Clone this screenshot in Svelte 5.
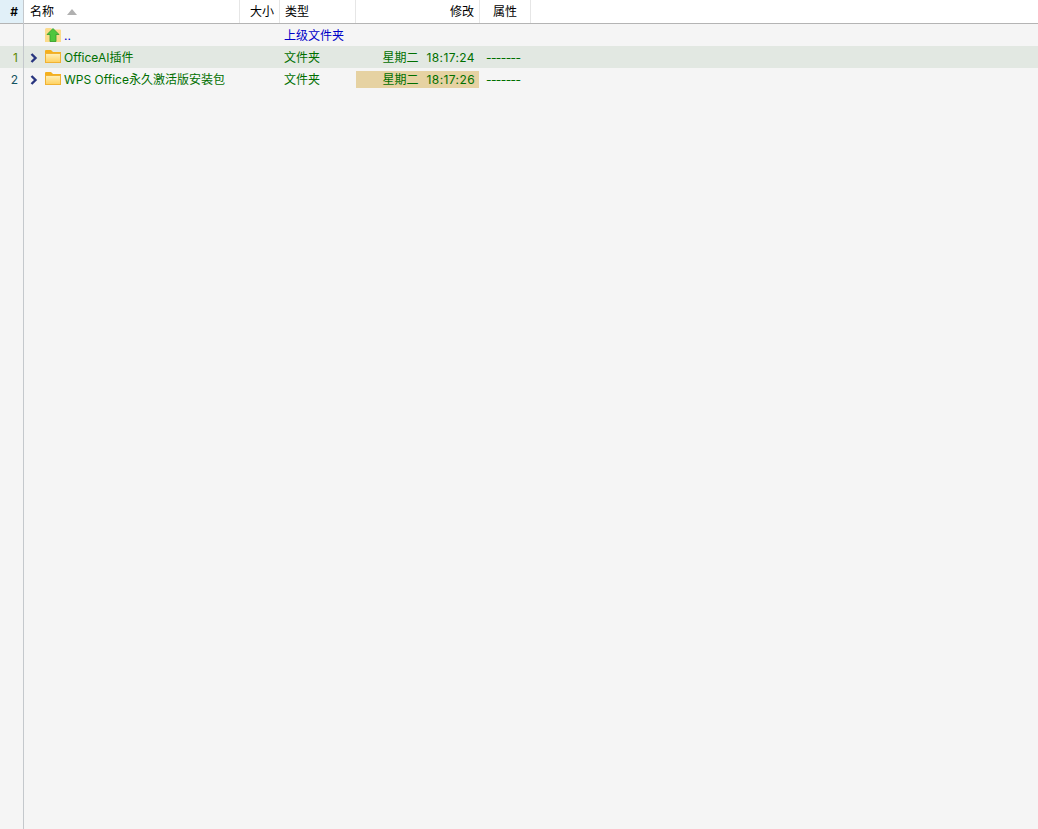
<script lang="ts">
  const rows = [
    { n: 1, name: "OfficeAI插件", day: "星期二", time: "18:17:24", recent: false, selected: true },
    { n: 2, name: "WPS Office永久激活版安装包", day: "星期二", time: "18:17:26", recent: true, selected: false },
  ];
</script>

{#snippet folder()}
  <svg class="icon" width="16" height="13" viewBox="0 0 16 13" aria-hidden="true">
    <defs>
      <linearGradient id="fold" x1="0" y1="0" x2="0" y2="1">
        <stop offset="0" stop-color="#ffeeb4" />
        <stop offset="1" stop-color="#ffd262" />
      </linearGradient>
    </defs>
    <path d="M0 3 V1 Q0 0 1 0 H6 L8 2 H16 V4 H0 Z" fill="#f5b01c" />
    <rect x="0" y="3" width="16" height="10" fill="#f0b232" />
    <rect x="1" y="4" width="14" height="8" fill="url(#fold)" />
  </svg>
{/snippet}

<div class="list">
  <div class="gutter">
    <div class="hash">#</div>
    <div class="num"></div>
    {#each rows as r}
      <div class="num" class:sel={r.selected}>{r.n}</div>
    {/each}
  </div>

  <div class="main">
    <div class="head">
      <div class="h name">名称<span class="sort"></span></div>
      <div class="h size">大小</div>
      <div class="h type">类型</div>
      <div class="h mod">修改</div>
      <div class="h attr">属性</div>
    </div>

    <div class="row parent">
      <div class="c name">
        <span class="chev"></span>
        <svg class="icon up" width="16" height="14" viewBox="0 0 16 14" aria-hidden="true">
          <path d="M0 1.5 Q0 0 1.5 0 H6 L7.5 1.5 H15 Q16 1.5 16 2.5 V14 H0 Z" fill="#fbdb8b" />
          <path d="M8 0.5 L14 6.5 H11 V13.5 H5 V6.5 H2 Z" fill="#4fc63e" stroke="#2f9e2c" stroke-width="0.8" />
        </svg>
        <span class="label">..</span>
      </div>
      <div class="c size"></div>
      <div class="c type">上级文件夹</div>
      <div class="c mod"></div>
      <div class="c attr"></div>
    </div>

    {#each rows as r}
      <div class="row" class:sel={r.selected}>
        <div class="c name">
          <span class="chev">
            <svg width="8" height="10" viewBox="0 0 8 10" aria-hidden="true">
              <path d="M1.5 1 L5.5 5 L1.5 9" fill="none" stroke="#28357f" stroke-width="2.4" />
            </svg>
          </span>
          {@render folder()}
          <span class="label">{r.name}</span>
        </div>
        <div class="c size"></div>
        <div class="c type">文件夹</div>
        <div class="c mod" class:recent={r.recent}>
          <span class="day">{r.day}</span><span class="time">{r.time}</span>
        </div>
        <div class="c attr">-------</div>
      </div>
    {/each}
  </div>
</div>

<style>
  :global(body) {
    margin: 0;
    background: #f5f5f5;
  }
  .list {
    display: flex;
    height: 829px;
    overflow: hidden;
    font-family: Inter, "Noto Sans CJK SC", sans-serif;
    font-size: 12px;
    color: #000;
  }
  .gutter {
    flex: none;
    width: 23px;
    border-right: 1px solid #c4c8cc;
  }
  .hash {
    height: 23px;
    background: #e1f0f8;
    border-bottom: 1px solid #b4b4b4;
    text-align: right;
    padding-right: 5px;
    line-height: 23px;
    font-weight: 600;
  }
  .num {
    height: 22px;
    line-height: 24px;
    text-align: right;
    padding-right: 5px;
    color: #14535f;
  }
  .num.sel {
    background: #e2e8e2;
    color: #5d8a00;
  }
  .main {
    flex: 1;
    min-width: 0;
  }
  .head {
    display: grid;
    grid-template-columns: 216px 40px 76px 124px 51px;
    height: 23px;
    background: #fff;
    border-bottom: 1px solid #b4b4b4;
  }
  .h {
    line-height: 23px;
    border-right: 1px solid #e6e6e6;
    padding: 0 5px;
  }
  .h.name {
    display: flex;
    align-items: center;
    padding-left: 6px;
  }
  .sort {
    margin-left: 13px;
    border-left: 5.5px solid transparent;
    border-right: 5.5px solid transparent;
    border-bottom: 6px solid #b0b0b0;
  }
  .h.size, .h.mod { text-align: right; }
  .h.attr { text-align: center; }
  .row {
    display: grid;
    grid-template-columns: 216px 40px 76px 124px 51px;
    grid-auto-rows: 22px;
    height: 22px;
    line-height: 24px;
    color: #006f00;
  }
  .row.sel {
    background: #e2e8e2;
  }
  .row.parent { color: #0000c8; }
  .c { white-space: nowrap; }
  .c.name {
    display: flex;
    align-items: center;
    padding-left: 6px;
  }
  .chev {
    flex: none;
    width: 15px;
    display: flex;
    align-items: center;
    margin-top: 2px;
  }
  .icon {
    flex: none;
    margin-top: -1px;
  }
  .icon.up { margin-top: 0; }
  .label {
    margin-left: 3px;
    margin-top: 2px;
  }
  .c.type { padding-left: 4px; }
  .c.mod {
    display: flex;
    justify-content: flex-end;
    gap: 8px;
    padding-right: 4px;
    margin: 3px 1px 2px 0;
    line-height: 18px;
    height: 17px;
  }
  .c.mod.recent { background: #e6d2a2; }
  .time { letter-spacing: 0.4px; }
  .c.attr {
    padding-left: 6px;
    letter-spacing: -0.6px;
  }
</style>
